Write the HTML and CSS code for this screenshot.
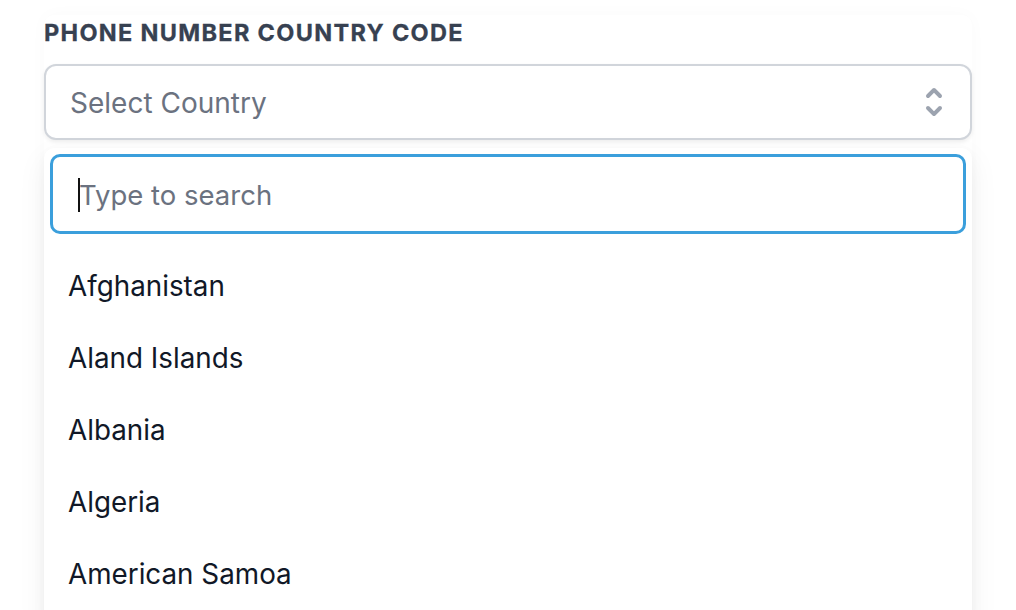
FILE: index.html
```html
<!DOCTYPE html>
<html>
<head>
<meta charset="utf-8">
<link rel="stylesheet" href="styles.css">
</head>
<body>
<div class="card">
  <div class="label">Phone Number Country Code</div>
  <div class="select">
    <span class="select-text">Select Country</span>
    <svg class="chev" viewBox="0 0 20 20" width="40" height="40" fill="currentColor"><path fill-rule="evenodd" d="M10 3a1 1 0 01.707.293l3 3a1 1 0 01-1.414 1.414L10 5.414 7.707 7.707a1 1 0 01-1.414-1.414l3-3A1 1 0 0110 3zm-3.707 9.293a1 1 0 011.414 0L10 14.586l2.293-2.293a1 1 0 011.414 1.414l-3 3a1 1 0 01-1.414 0l-3-3a1 1 0 010-1.414z" clip-rule="evenodd"/></svg>
  </div>
</div>
<div class="dropdown">
  <div class="search"><span class="caret"></span><span class="ph">Type to search</span></div>
  <ul class="options">
    <li>Afghanistan</li>
    <li>Aland Islands</li>
    <li>Albania</li>
    <li>Algeria</li>
    <li>American Samoa</li>
  </ul>
</div>
</body>
</html>
```
FILE: styles.css
```css
html, body {
  margin: 0;
  padding: 0;
  background: #fff;
  overflow: hidden;
  height: 610px;
}
body {
  font-family: Inter, "Noto Sans", sans-serif;
  position: relative;
}
.card {
  margin: 15px 0 0 44px;
  width: 928px;
  height: 620px;
  border-radius: 10px;
  box-shadow: 0 0 18px rgba(0, 0, 0, 0.025);
  background: #fff;
}
.label {
  padding-top: 2px;
  font-size: 23.5px;
  line-height: 32px;
  font-weight: 700;
  text-transform: uppercase;
  letter-spacing: 0.056em;
  color: #374151;
  -webkit-text-stroke: 0.3px #374151;
}
.select {
  margin-top: 15px;
  height: 76px;
  box-sizing: border-box;
  border: 2px solid #d1d5db;
  border-radius: 12px;
  box-shadow: 0 2px 4px rgba(0, 0, 0, 0.07);
  display: flex;
  align-items: center;
  justify-content: space-between;
  padding: 2px 16px 0 24px;
  background: #fff;
}
.select-text {
  font-size: 28px;
  color: #6b7280;
}
.chev {
  color: #9ca3af;
  display: block;
  margin-top: -2px;
}
.dropdown {
  position: absolute;
  top: 148px;
  left: 44px;
  width: 928px;
  height: 480px;
  box-sizing: border-box;
  padding: 6px;
  background: #fff;
  border-radius: 10px;
  box-shadow: 0 10px 30px rgba(0, 0, 0, 0.06), 0 2px 8px rgba(0, 0, 0, 0.03);
}
.search {
  height: 80px;
  box-sizing: border-box;
  border: 3px solid #3b9fdc;
  border-radius: 10px;
  display: flex;
  align-items: center;
  padding: 2px 0 0 25px;
}
.caret {
  width: 2px;
  height: 34px;
  background: #111;
}
.ph {
  font-size: 27.5px;
  color: #6b7280;
  margin-left: -1px;
}
.options {
  list-style: none;
  margin: 16px 0 0 0;
  padding: 0;
}
.options li {
  padding: 16px 0 16px 18px;
  line-height: 40px;
  font-size: 27.8px;
  color: #111827;
}
```
